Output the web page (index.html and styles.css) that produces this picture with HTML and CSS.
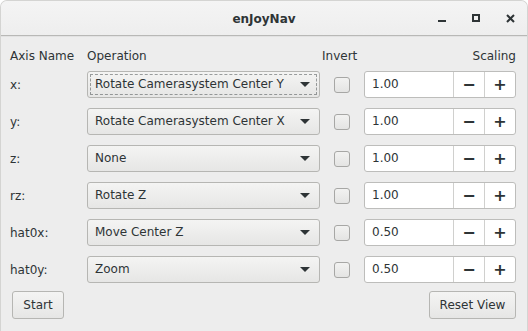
FILE: index.html
```html
<!DOCTYPE html>
<html lang="en">
<head>
  <meta charset="UTF-8">
  <title>enJoyNav</title>
  <link rel="stylesheet" href="styles.css">
</head>
<body>
  <div class="window">
    <header class="titlebar">
      <span></span>
      <span class="title">enJoyNav</span>
      <div class="wm">
        <span class="wm-btn"><svg width="8" height="8" viewBox="0 0 8 8"><rect x="0" y="6" width="8" height="2"/></svg></span>
        <span class="wm-btn"><svg width="8" height="8" viewBox="0 0 8 8"><path d="M0 0h8v8H0z M2 2v4h4V2z" fill-rule="evenodd"/></svg></span>
        <span class="wm-btn"><svg width="9" height="9" viewBox="0 0 9 9"><path d="M1 1l7 7M8 1l-7 7" stroke-width="2" stroke="currentColor"/></svg></span>
      </div>
    </header>

    <main class="content">
      <div class="grid head">
        <span>Axis Name</span>
        <span>Operation</span>
        <span>Invert</span>
        <span class="right">Scaling</span>
      </div>

      <div class="grid rows">
        <span class="lbl">x:</span>
        <div class="combo focus">Rotate Camerasystem Center Y<i class="arrow"></i></div>
        <span class="check"></span>
        <div class="spin"><span class="val">1.00</span><span class="sb">−</span><span class="sb">+</span></div>

        <span class="lbl">y:</span>
        <div class="combo">Rotate Camerasystem Center X<i class="arrow"></i></div>
        <span class="check"></span>
        <div class="spin"><span class="val">1.00</span><span class="sb">−</span><span class="sb">+</span></div>

        <span class="lbl">z:</span>
        <div class="combo">None<i class="arrow"></i></div>
        <span class="check"></span>
        <div class="spin"><span class="val">1.00</span><span class="sb">−</span><span class="sb">+</span></div>

        <span class="lbl">rz:</span>
        <div class="combo">Rotate Z<i class="arrow"></i></div>
        <span class="check"></span>
        <div class="spin"><span class="val">1.00</span><span class="sb">−</span><span class="sb">+</span></div>

        <span class="lbl">hat0x:</span>
        <div class="combo">Move Center Z<i class="arrow"></i></div>
        <span class="check"></span>
        <div class="spin"><span class="val">0.50</span><span class="sb">−</span><span class="sb">+</span></div>

        <span class="lbl">hat0y:</span>
        <div class="combo">Zoom<i class="arrow"></i></div>
        <span class="check"></span>
        <div class="spin"><span class="val">0.50</span><span class="sb">−</span><span class="sb">+</span></div>
      </div>

      <div class="footer">
        <button class="btn start">Start</button>
        <button class="btn reset">Reset View</button>
      </div>
    </main>
  </div>
</body>
</html>
```

FILE: styles.css
```css
:root {
  --fg: #2e3436;
  --border: #b6b6b3;
  --bg: #ededed;
}
html {background:#fff;}
body {
  margin:0; font-family:"DejaVu Sans", sans-serif; font-size:12px;
  color:var(--fg);
}
.window {
  width:528px; height:331px; box-sizing:border-box;
  background:var(--bg);
  border-radius:7px 7px 0 0;
  border:1px solid #d4d4d2; border-bottom:none;
  display:flex; flex-direction:column;
  overflow:hidden;
}
.titlebar {
  height:34px; flex:none;
  display:grid; grid-template-columns:1fr auto 1fr; align-items:center;
  background:linear-gradient(#f4f4f4, #eeeeee);
  border-bottom:1px solid #b8b8b6;
  box-shadow:0 1px 0 #e2e2e2;
}
.title {font-weight:bold; font-size:12px; padding-top:1px;}
.wm {display:flex; justify-content:flex-end;}
.wm-btn {
  width:34px; height:34px; display:flex; align-items:center; justify-content:center;
  color:var(--fg); fill:var(--fg);
}
.wm-btn:last-child svg {fill:none;}

.content {padding:12px 11px 0 9px; display:flex; flex-direction:column;}
.grid {
  display:grid; grid-template-columns:77px 233px 44px 152px;
  align-items:center;
}
.head {line-height:17px; margin-bottom:6px;}
.head span:nth-child(3) {padding-left:2px;}
.head .right {text-align:right;}
.rows {grid-auto-rows:27px; row-gap:10px;}

.combo {
  position:relative; height:27px; box-sizing:border-box;
  border:1px solid var(--border); border-radius:3px;
  background:linear-gradient(#f4f4f3, #e6e6e5);
  padding-left:7px; line-height:25px;
}
.combo.focus {outline:1px dashed rgba(46,52,54,.45); outline-offset:-4px;}
.arrow {
  position:absolute; right:9px; top:10px;
  width:0; height:0;
  border-left:5px solid transparent; border-right:5px solid transparent;
  border-top:5px solid var(--fg);
}
.check {
  justify-self:center;
  width:16px; height:16px; box-sizing:border-box;
  border:1px solid #a7a7a5; border-radius:3px;
  background:linear-gradient(#f2f2f1, #e4e4e3);
}
.spin {
  display:flex; height:27px; box-sizing:border-box;
  border:1px solid #bdbdbb; border-radius:3px; background:#fff;
}
.val {flex:1; padding-left:7px; line-height:25px;}
.sb {
  width:30px; flex:none; border-left:1px solid #d0d0ce;
  display:flex; align-items:center; justify-content:center;
  font-size:16px; font-weight:bold; line-height:25px;
}
.footer {
  display:flex; justify-content:space-between; margin-top:8px; padding-left:2px;
}
.btn {
  font:inherit; color:var(--fg); height:28px;
  border:1px solid var(--border); border-radius:3px;
  background:linear-gradient(#f4f4f3, #e6e6e5);
  padding:0;
}
.start {width:52px;}
.reset {width:87px;}
```
